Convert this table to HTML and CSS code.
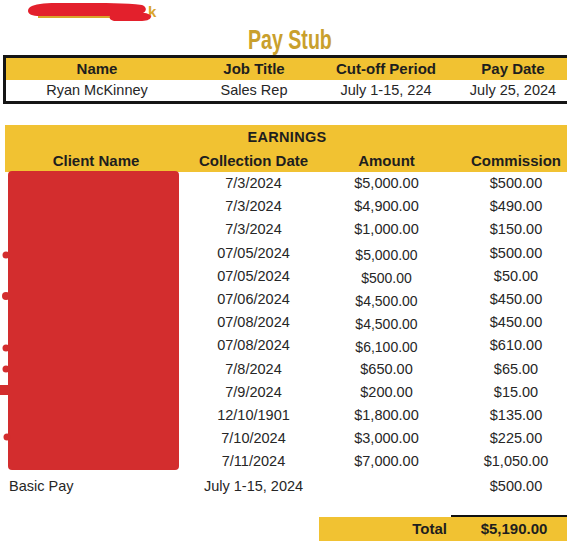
FILE: index.html
```html
<!DOCTYPE html>
<html>
<head>
<meta charset="utf-8">
<link rel="stylesheet" href="styles.css">
</head>
<body>
<div class="page">
  <div class="brand">
    <span class="brand-text">k</span>
    <svg class="scribble" width="160" height="24" viewBox="0 0 160 24">
      <rect x="38" y="15" width="74" height="3" fill="#d9a52a"/>
      <path d="M32,6 C40,2 60,3 80,3 C104,3 126,3 142,5 C147,7 147,11 143,13 C148,13 151,15 151,17 C150,20 146,21 140,21 L114,21 C110,20 109,18 110,16 C88,16 60,16 40,16 C32,16 28,14 28,11 C28,9 29,7 32,6 Z" fill="#e3202c"/>
    </svg>
  </div>
  <h1 class="title"><span class="title-text">Pay Stub</span></h1>

  <div class="info">
    <div class="grid head">
      <div>Name</div><div>Job Title</div><div>Cut-off Period</div><div>Pay Date</div>
    </div>
    <div class="grid info-row">
      <div>Ryan McKinney</div><div>Sales Rep</div><div>July 1-15, 224</div><div>July 25, 2024</div>
    </div>
  </div>

  <section class="earnings">
    <div class="band">
      <div class="band-title">EARNINGS</div>
      <div class="grid head band-head">
        <div>Client Name</div><div>Collection Date</div><div>Amount</div><div>Commission</div>
      </div>
    </div>
    <div class="rows">
      <div class="grid row"><div></div><div>7/3/2024</div><div>$5,000.00</div><div>$500.00</div></div>
      <div class="grid row"><div></div><div>7/3/2024</div><div>$4,900.00</div><div>$490.00</div></div>
      <div class="grid row"><div></div><div>7/3/2024</div><div>$1,000.00</div><div>$150.00</div></div>
      <div class="grid row"><div></div><div>07/05/2024</div><div class="low">$5,000.00</div><div>$500.00</div></div>
      <div class="grid row"><div></div><div>07/05/2024</div><div class="low">$500.00</div><div>$50.00</div></div>
      <div class="grid row"><div></div><div>07/06/2024</div><div class="low">$4,500.00</div><div>$450.00</div></div>
      <div class="grid row"><div></div><div>07/08/2024</div><div class="low">$4,500.00</div><div>$450.00</div></div>
      <div class="grid row"><div></div><div>07/08/2024</div><div class="low">$6,100.00</div><div>$610.00</div></div>
      <div class="grid row"><div></div><div>7/8/2024</div><div>$650.00</div><div>$65.00</div></div>
      <div class="grid row"><div></div><div>7/9/2024</div><div>$200.00</div><div>$15.00</div></div>
      <div class="grid row"><div></div><div>12/10/1901</div><div>$1,800.00</div><div>$135.00</div></div>
      <div class="grid row"><div></div><div>7/10/2024</div><div>$3,000.00</div><div>$225.00</div></div>
      <div class="grid row"><div></div><div>7/11/2024</div><div>$7,000.00</div><div>$1,050.00</div></div>
      <div class="grid row basic"><div class="left">Basic Pay</div><div>July 1-15, 2024</div><div></div><div>$500.00</div></div>
    </div>
    <svg class="redact" width="180" height="300" viewBox="0 0 180 300">
      <rect x="8" y="0" width="171" height="299" rx="4" fill="#d32d2e"/>
      <circle cx="6" cy="84" r="3.5" fill="#d32d2e"/>
      <circle cx="6" cy="125" r="4" fill="#d32d2e"/>
      <circle cx="6" cy="177" r="3.5" fill="#d32d2e"/>
      <circle cx="6" cy="198" r="3.5" fill="#d32d2e"/>
      <rect x="0" y="214" width="9" height="10" fill="#d32d2e"/>
      <circle cx="7" cy="266" r="3.5" fill="#d32d2e"/>
    </svg>
  </section>

  <div class="total">
    <div class="total-label">Total</div>
    <div class="total-value">$5,190.00</div>
  </div>
</div>
</body>
</html>
```

FILE: styles.css
```css
html, body {
  margin: 0;
  padding: 0;
  background: #ffffff;
}
.page {
  width: 567px;
  height: 546px;
  overflow: hidden;
  font-family: "Liberation Sans", Arial, sans-serif;
  color: #262626;
  font-size: 14.5px;
}
.brand {
  height: 24px;
  position: relative;
}
.brand-text {
  position: absolute;
  left: 148px;
  top: 3px;
  font-weight: bold;
  font-size: 15px;
  color: #d9a52a;
}
.scribble {
  position: absolute;
  left: 0;
  top: 0;
}
.title {
  margin: 0;
  height: 31px;
  line-height: 31px;
  text-align: center;
  padding-left: 12px;
  font-size: 28px;
  font-weight: bold;
  color: #c9a02c;
}
.title-text {
  display: inline-block;
  transform: scaleX(0.7);
}
.info {
  margin-left: 3px;
  width: 568px;
  border: 3px solid #151515;
  border-right: none;
}
.grid {
  display: grid;
  grid-template-columns: 182px 132px 132px 122px;
  text-align: center;
}
.head {
  background: #f1c232;
  font-weight: bold;
  font-size: 15px;
  color: #1e1e1e;
}
.info .head {
  height: 22px;
  line-height: 22px;
}
.info-row {
  height: 21px;
  line-height: 21px;
}
.earnings {
  position: relative;
  margin-top: 21px;
}
.band {
  margin-left: 5px;
  background: #f1c232;
  height: 47px;
}
.band-title {
  height: 24px;
  line-height: 24px;
  text-align: center;
  padding-left: 2px;
  font-weight: bold;
  font-size: 14.5px;
  letter-spacing: 0.3px;
  color: #1e1e1e;
}
.band-head {
  height: 23px;
  line-height: 23px;
  grid-template-columns: 182px 133px 133px 126px;
}
.rows {
  margin-left: 5px;
}
.row {
  height: 23.2px;
  line-height: 23.2px;
  grid-template-columns: 182px 133px 133px 126px;
}
.low {
  position: relative;
  top: 2px;
  font-size: 14px;
}
.basic {
  height: 25px;
  line-height: 25px;
  margin-top: 1px;
}
.left {
  text-align: left;
  padding-left: 4px;
}
.redact {
  position: absolute;
  left: 0;
  top: 46px;
}
.total {
  margin-top: 18px;
  margin-left: 319px;
  display: grid;
  grid-template-columns: 132px 126px;
  background: #f1c232;
  height: 24px;
  line-height: 24px;
  font-weight: bold;
  font-size: 15px;
  color: #1e1e1e;
  position: relative;
}
.total-label {
  text-align: right;
  padding-right: 4px;
}
.total-value {
  text-align: center;
  border-top: 2px solid #111;
  margin-top: -2px;
  line-height: 24px;
}
```
